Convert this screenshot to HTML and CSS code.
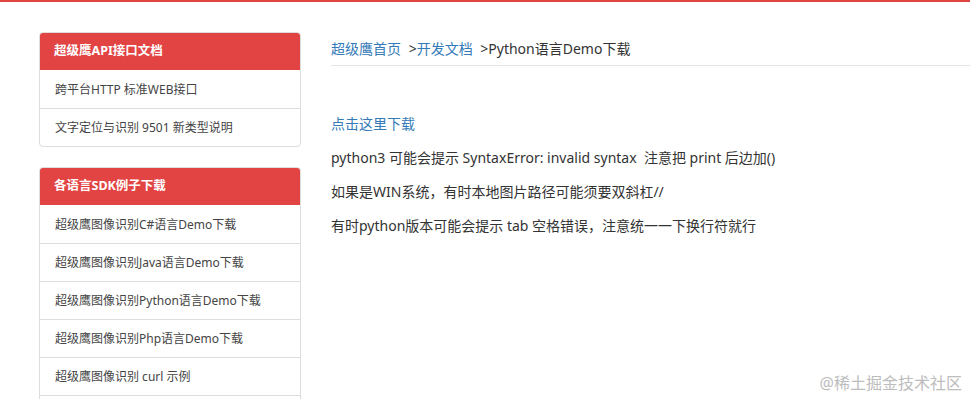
FILE: index.html
```html
<!DOCTYPE html>
<html lang="zh-CN">
<head>
<meta charset="utf-8">
<title>Python语言Demo下载</title>
<link rel="stylesheet" href="styles.css">
</head>
<body>
<div class="topbar"></div>
<div class="page">
  <aside class="sidebar">
    <div class="panel">
      <div class="panel-head">超级鹰API接口文档</div>
      <ul class="list">
        <li class="item">跨平台HTTP 标准WEB接口</li>
        <li class="item">文字定位与识别 9501 新类型说明</li>
      </ul>
    </div>
    <div class="panel">
      <div class="panel-head">各语言SDK例子下载</div>
      <ul class="list">
        <li class="item">超级鹰图像识别C#语言Demo下载</li>
        <li class="item">超级鹰图像识别Java语言Demo下载</li>
        <li class="item">超级鹰图像识别Python语言Demo下载</li>
        <li class="item">超级鹰图像识别Php语言Demo下载</li>
        <li class="item">超级鹰图像识别 curl 示例</li>
        <li class="item item-empty"></li>
      </ul>
    </div>
  </aside>
  <main class="main">
    <div class="crumb"><a class="link" href="#">超级鹰首页</a> &gt;<a class="link" href="#">开发文档</a> &gt;Python语言Demo下载</div>
    <div class="content">
      <p><a class="link" href="#">点击这里下载</a></p>
      <p>python3 可能会提示 SyntaxError: invalid syntax &nbsp;注意把 print 后边加()</p>
      <p>如果是WIN系统，有时本地图片路径可能须要双斜杠//</p>
      <p>有时python版本可能会提示 tab 空格错误，注意统一一下换行符就行</p>
    </div>
  </main>
</div>
<div class="watermark">@稀土掘金技术社区</div>
</body>
</html>
```
FILE: styles.css
```css
html, body {
  margin: 0;
  padding: 0;
  background: #fff;
  overflow: hidden;
}
body {
  font-family: "Noto Sans", "Noto Sans CJK SC", sans-serif;
  color: #333;
  height: 399px;
  position: relative;
}
.topbar {
  height: 2px;
  background: #e24444;
}
.page {
  display: flex;
  gap: 30px;
  padding: 30px 0 0 39px;
}
.sidebar {
  width: 262px;
  flex: none;
}
.panel {
  border: 1px solid #ddd;
  border-radius: 4px;
  margin-bottom: 20px;
  overflow: hidden;
}
.panel-head {
  background: #e24444;
  color: #fff;
  font-size: 12.5px;
  font-weight: 700;
  line-height: 18px;
  padding: 10px 15px 10px;
  margin: -1px -1px 0;
  border-radius: 4px 4px 0 0;
}
.list {
  list-style: none;
  margin: 0;
  padding: 0;
}
.item {
  font-size: 12px;
  line-height: 17px;
  padding: 10px 15px;
  border-top: 1px solid #ddd;
  color: #444;
}
.item-empty {
  height: 17px;
}
.panel-head + .list .item:first-child {
  border-top: 0;
  padding-top: 11px;
}
.main {
  flex: 1;
  min-width: 0;
  font-size: 14px;
}
.crumb {
  line-height: 20px;
  padding: 7px 0 6px;
  border-bottom: 1px solid #e5e5e5;
  color: #333;
  word-spacing: 4px;
}
.link {
  color: #337ab7;
  text-decoration: none;
}
.content {
  padding-top: 46px;
}
.content p {
  margin: 0 0 10px;
  line-height: 24px;
}
.watermark {
  position: absolute;
  right: 8px;
  bottom: 6px;
  font-size: 16px;
  color: #bdbdbd;
  line-height: 20px;
}
```
